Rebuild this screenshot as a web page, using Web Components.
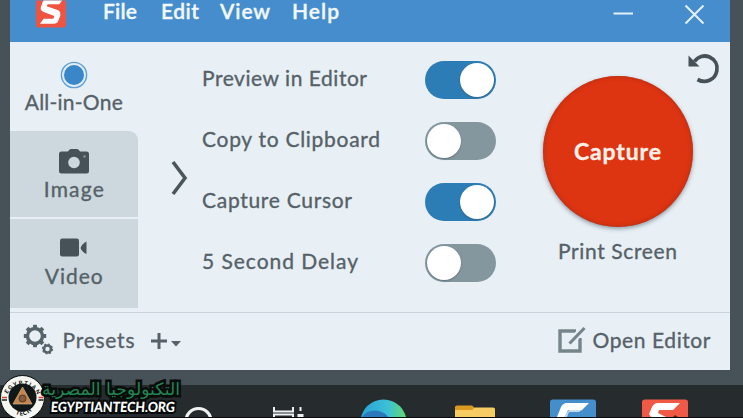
<!DOCTYPE html>
<html lang="en">
<head>
    <meta charset="UTF-8">
    <title>Capture</title>
    <style>
        body {
            margin: 0;
            width: 743px;
            height: 418px;
            overflow: hidden;
            background: #465257;
            font-family: Lato, "Open Sans", "Liberation Sans", sans-serif;
            font-size: 21px;
            color: #566168;
        }
    </style>
</head>

<body>
<capture-desktop>
    <capture-window>
        <title-bar slot="title"></title-bar>
        <mode-tab slot="modes" kind="all" label="All-in-One" w="98" selected></mode-tab>
        <mode-tab slot="modes" kind="image" label="Image" w="60"></mode-tab>
        <mode-tab slot="modes" kind="video" label="Video" w="58"></mode-tab>
        <toggle-row slot="options" label="Preview in Editor" w="165" on></toggle-row>
        <toggle-row slot="options" label="Copy to Clipboard" w="178"></toggle-row>
        <toggle-row slot="options" label="Capture Cursor" w="150" on></toggle-row>
        <toggle-row slot="options" label="5 Second Delay" w="156"></toggle-row>
        <capture-button slot="action"></capture-button>
        <window-footer slot="footer"></window-footer>
    </capture-window>
    <task-bar slot="taskbar"></task-bar>
    <site-badge slot="badge"></site-badge>
</capture-desktop>

<script>
  class BaseElement extends HTMLElement {
    constructor() {
      super();
      this.attachShadow({mode: "open"});
    }

    connectedCallback() {
      this.shadowRoot.innerHTML = this.render();
    }
  }

  // a single line of text, tracked so that it takes exactly w pixels
  class FitText extends HTMLElement {
    constructor() {
      super();
      this.attachShadow({mode: "open"});
      this.shadowRoot.innerHTML = `
        <style>
          :host { display: block; white-space: nowrap; line-height: 24px; }
          span { display: inline-block; -webkit-text-stroke: 0.35px currentColor; }
        </style>
        <span><slot></slot></span>`;
    }

    connectedCallback() {
      const width = parseFloat(this.getAttribute("w"));
      const span = this.shadowRoot.querySelector("span");
      const count = this.textContent.length;
      const spacing = (width - span.getBoundingClientRect().width) / (count - 1);
      span.style.letterSpacing = `${spacing}px`;
      span.style.marginRight = `${-spacing}px`;
    }
  }

  class CaptureDesktop extends BaseElement {
    render() {
      return `
        <style>
          :host { display: flex; flex-direction: column; position: relative; height: 418px; }
          .space { flex: 1; padding: 0 13px 0 9.5px; }
        </style>
        <div class="space"><slot></slot></div>
        <slot name="taskbar"></slot>
        <slot name="badge"></slot>`;
    }
  }

  class CaptureWindow extends BaseElement {
    render() {
      return `
        <style>
          :host { display: flex; flex-direction: column; height: 370px; background: #e8f0f5; }
          main { display: flex; height: 270px; }
          nav { display: flex; flex-direction: column; gap: 2px; width: 128.500px; height: 266px; }
          .arrow { width: 64px; display: flex; justify-content: flex-end; padding: 118px 14px 0 0; box-sizing: border-box; }
          .options { width: 293.500px; padding-top: 7.500px; }
          .action { flex: 1; }
        </style>
        <slot name="title"></slot>
        <main>
          <nav><slot name="modes"></slot></nav>
          <div class="arrow">
            <svg width="17" height="36" viewBox="0 0 17 36" fill="none" stroke="#4b565b" stroke-width="3.6">
              <path d="M2 2L14 18L2 34"/>
            </svg>
          </div>
          <div class="options"><slot name="options"></slot></div>
          <div class="action"><slot name="action"></slot></div>
        </main>
        <slot name="footer"></slot>`;
    }
  }

  class TitleBar extends BaseElement {
    render() {
      return `
        <style>
          :host { display: flex; height: 42px; background: #458dcc; color: #f2f8fd; }
          .logo { margin-left: 26px; }
          .menu { display: flex; margin: -1.500px 0 0 37.500px; }
          .menu fit-text { font-weight: 600; }
          .buttons { margin-left: auto; }
        </style>
        <svg class="logo" width="30" height="28" viewBox="0 0 31 28">
          <path d="M0 0H31V25Q31 28 28 28H3Q0 28 0 25Z" fill="#ed5542"/>
          <path d="M27 0L24 4H12L11 6L23 10Q26 12 25 16L23 21Q22 24 18 24H4L8 19H18L19 16L8 12Q4 10 5 7L7 1L8 0Z" fill="#fff"/>
        </svg>
        <div class="menu">
          <fit-text w="34" style="width: 58px">File</fit-text>
          <fit-text w="38" style="width: 59px">Edit</fit-text>
          <fit-text w="50" style="width: 72px">View</fit-text>
          <fit-text w="47">Help</fit-text>
        </div>
        <svg class="buttons" width="117" height="42" viewBox="0 0 117 42" fill="none" stroke="#e4f1fb">
          <path d="M.5 13.500H20" stroke-width="2"/>
          <path d="M72.500 5.500L90.500 23.500M90.500 5.500L72.500 23.500" stroke-width="2"/>
        </svg>`;
    }
  }

  const modeIcons = {
    all: `<svg width="28" height="28" viewBox="0 0 28 28">
        <circle cx="14" cy="14" r="12.6" fill="#dfedf7" stroke="#609fd3" stroke-width="1.4"/>
        <circle cx="14" cy="14" r="10" fill="#3986c8"/>
      </svg>`,
    image: `<svg width="30" height="25" viewBox="0 0 30 25">
        <path d="M2.500 2.500H9Q10 0 12 0H18Q20 0 21 2.500H27.500Q30 2.500 30 5V22Q30 24.500 27.500 24.500H2.500Q0 24.500 0 22V5Q0 2.500 2.500 2.500Z" fill="#465257"/>
        <circle cx="15" cy="13.500" r="5.800" fill="#ccd8de"/>
        <circle cx="25.500" cy="7.500" r="1.200" fill="#87959b"/>
      </svg>`,
    video: `<svg width="27" height="19" viewBox="0 0 27 19" fill="#465257">
        <rect x="0" y="0.500" width="19" height="18" rx="2.200"/>
        <path d="M26.500 3.500V16Q22 14 20.500 10Q22 5.500 26.500 3.500Z"/>
      </svg>`
  };

  class ModeTab extends BaseElement {
    render() {
      const kind = this.getAttribute("kind");
      const heights = {all: 91, image: 86, video: 89};
      const tops = {all: 18.5, image: 18, video: 18.5};
      const gaps = {all: 1, image: 3, video: 7.5};
      return `
        <style>
          :host { display: flex; flex-direction: column; align-items: center; box-sizing: border-box;
            height: ${heights[kind]}px; padding-top: ${tops[kind]}px; background: #ccd8de; }
          :host([selected]) { background: #e8f0f5; border-radius: 0 0 0 8px; margin-bottom: -4px; }
          :host([kind="image"]) { border-radius: 0 9px 0 0; }
          svg { display: block; flex: none; }
          fit-text { margin-top: ${gaps[kind]}px; }
        </style>
        ${modeIcons[kind]}
        <fit-text w="${this.getAttribute("w")}">${this.getAttribute("label")}</fit-text>`;
    }
  }

  class ToggleRow extends BaseElement {
    render() {
      return `
        <style>
          :host { display: flex; align-items: center; justify-content: space-between; height: 61px; }
          .track { display: flex; box-sizing: border-box; width: 71px; height: 38px; padding: 2px;
            border-radius: 19px; background: #84979f; }
          .knob { width: 34px; height: 34px; border-radius: 50%; background: #fff; box-shadow: 0 1px 2px #354c5a77; }
          :host([on]) .track { background: #2c7db5; justify-content: flex-end; }
          fit-text { padding-bottom: 4px; }
        </style>
        <fit-text w="${this.getAttribute("w")}">${this.getAttribute("label")}</fit-text>
        <div class="track"><div class="knob"></div></div>`;
    }
  }

  class CaptureButton extends BaseElement {
    render() {
      return `
        <style>
          :host { display: flex; flex-direction: column; box-sizing: border-box; height: 270px; padding: 10px 10px 0 47px; }
          .undo { align-self: flex-end; flex: none; margin-bottom: -10px; }
          .round { display: flex; align-items: center; justify-content: center; width: 150px; height: 151px;
            flex: none; border-radius: 50%; background: #dd3412; color: #fff0e8;
            box-shadow: 0 2px 4px #52647499, inset 0 0 4px #aa2e14; }
          .round fit-text { font-size: 23px; font-weight: 700; padding-bottom: 1px; }
          .key { display: flex; justify-content: center; width: 150px; margin-top: 12px; }
        </style>
        <svg class="undo" width="33" height="34" viewBox="0 0 33 34">
          <path d="M7.500 9.500C11 4.500 17 2.700 22.500 5C28 7.500 31 13 29.800 19C28 28 18.500 32 10.500 27.500" fill="none" stroke="#465257" stroke-width="3.800"/>
          <path d="M1.500 3.500L12.500 14.500H1.500Z" fill="#465257"/>
        </svg>
        <div class="round"><fit-text w="87">Capture</fit-text></div>
        <div class="key"><fit-text w="119">Print Screen</fit-text></div>`;
    }
  }

  class WindowFooter extends BaseElement {
    render() {
      let teeth = "";
      for (let i = 0; i < 8; i++) {
        teeth += `<path d="M12 .8V5" transform="rotate(${i * 45} 12 12)"/>`;
      }
      return `
        <style>
          :host { display: flex; align-items: center; box-sizing: border-box; height: 58px;
            padding: 0 19.500px 4px 13px; border-top: 1px solid #cad5db; }
          .gears { margin-right: 9px; }
          .plus { margin-left: 15px; padding-top: 2px; }
          .edit { margin: 0 6px 0 auto; }
        </style>
        <svg class="gears" width="31" height="31" viewBox="0 0 31 31" fill="none" stroke="#56636a">
          <circle cx="12" cy="12" r="7.500" stroke-width="3.400"/>
          <g stroke-width="4">${teeth}</g>
          <circle cx="24.500" cy="25" r="3.500" stroke-width="2.600"/>
          <circle cx="24.500" cy="25" r="5" stroke-width="1.200" stroke-dasharray="2 1.900"/>
        </svg>
        <fit-text w="72">Presets</fit-text>
        <svg class="plus" width="32" height="18" viewBox="0 0 32 18">
          <path d="M1 9H17M9 1V17" fill="none" stroke="#566168" stroke-width="3"/>
          <path d="M21 9H31L26 14.500Z" fill="#566168"/>
        </svg>
        <svg class="edit" width="28" height="28" viewBox="0 0 28 28" fill="none">
          <path d="M18 5H2V25H22V12" stroke="#76858b" stroke-width="3.400"/>
          <path d="M12 17L26 2" stroke="#e8f0f5" stroke-width="7"/>
          <path d="M11.500 17.500L26.500 2" stroke="#76858b" stroke-width="3.200"/>
        </svg>
        <fit-text w="118">Open Editor</fit-text>`;
    }
  }

  class TaskBar extends BaseElement {
    render() {
      return `
        <style>
          :host { display: flex; align-items: flex-end; box-sizing: border-box; height: 33px; padding-left: 184px;
            background: #262c2e; border-bottom: 1px solid #090b0c; overflow: hidden; }
          svg { display: block; flex: none; }
        </style>
        <svg width="30" height="11" viewBox="0 0 30 11">
          <circle cx="14.500" cy="15" r="12.500" fill="none" stroke="#f0f2f2" stroke-width="3.200"/>
        </svg>
        <svg width="33" height="11" viewBox="0 0 33 11" style="margin-left: 58px" fill="none" stroke="#edf0f1" stroke-width="2">
          <path d="M2 1V5.500H21V1M2 11V8.500H21V11M28.500 1V5"/>
          <path d="M25.500 8H31.500V12H25.500Z" fill="#edf0f1" stroke="none"/>
        </svg>
        <svg width="47" height="18" viewBox="0 0 47 18" style="margin-left: 55px">
          <defs>
            <linearGradient id="edge">
              <stop offset="0" stop-color="#29a2d6"/>
              <stop offset=".6" stop-color="#3cc0d7"/>
              <stop offset="1" stop-color="#63dc69"/>
            </linearGradient>
          </defs>
          <ellipse cx="23.500" cy="23" rx="23" ry="22.500" fill="url(#edge)"/>
          <path d="M2 18Q8 10 19 12Q26 14 28 18Z" fill="#2b79bd"/>
        </svg>
        <svg width="41" height="12" viewBox="0 0 41 12" style="margin-left: 48px">
          <path d="M0 12V2Q0 .5 2 .5H17L20 3H38Q40 3 40 5V12Z" fill="#d99b20"/>
          <path d="M0 5H17L20 2.500H38Q40 2.500 40 4.500V12H0Z" fill="#f7cd63"/>
        </svg>
        <svg width="46" height="18" viewBox="0 0 46 18" style="margin-left: 54px">
          <path d="M0 18V3Q0 .5 3 .5H43Q46 .5 46 3V18Z" fill="#438ecb"/>
          <path d="M39 4L32 11H18L15 18H7L11 8Q13 4 17 4Z" fill="#fff"/>
          <path d="M19 11H32L29 13H19L17 18H14Z" fill="#c4d9ea"/>
        </svg>
        <svg width="46" height="18" viewBox="0 0 46 18" style="margin-left: 46px">
          <path d="M0 18V3Q0 .5 3 .5H43Q46 .5 46 3V18Z" fill="#ef5945"/>
          <path d="M38 4L31 11H17L16 14L24 18H9L7 15L10 8Q12 4 16 4Z" fill="#fff"/>
          <path d="M33 16L36 18H31Z" fill="#562a28"/>
        </svg>`;
    }
  }

  // site mark that floats over the lower left corner
  class SiteBadge extends BaseElement {
    render() {
      return `
        <style>
          :host { display: flex; position: absolute; left: 0; top: 375px; width: 184px; height: 43px; overflow: hidden; }
          svg { display: block; flex: none; }
          .names { display: flex; flex-direction: column; align-items: flex-end; width: 138px; margin: 5px 0 0 -3px; }
          .arabic { width: 138px; text-align: right; white-space: nowrap;
            font: 17px/19px "DejaVu Sans", sans-serif; color: #238553; direction: rtl;
            -webkit-text-stroke: 5px #080d0b; paint-order: stroke fill; }
          .site { font: 900 14px/15px Lato, sans-serif; color: #fff; width: 129px;
            white-space: nowrap; -webkit-text-stroke: 4px #050909; paint-order: stroke fill; }
        </style>
        <svg width="45" height="43" viewBox="0 0 45 43">
          <defs><path id="arc" d="M6.500 23A16 16 0 0 1 38 23"/><path id="low" d="M6 29Q21 52 38 29"/></defs>
          <circle cx="22.500" cy="22.500" r="22" fill="#f5f5f1" stroke="#0b0d0d"/>
          <circle cx="22.500" cy="22.500" r="14" fill="#101719"/>
          <path d="M22.500 12L32 29H13Z" fill="#c28551" stroke="#d8ad79" stroke-width=".7"/>
          <circle cx="22.500" cy="23.500" r="3.500" fill="#8a5c3e" stroke="#513828"/>
          <path d="M2 22.500H7M38.500 22.500H43.500" stroke="#ce4a38" stroke-width="1.500"/>
          <path d="M2 25H7M38.500 25H43.500" stroke="#222" stroke-width="1.500"/>
          <g fill="#111" font-family="Lato, sans-serif" font-size="5.800" font-weight="900">
            <text letter-spacing="1.200"><textPath href="#arc" startOffset="4">EGYPTIAN</textPath></text>
            <text letter-spacing=".8"><textPath href="#low" startOffset="14">TECH</textPath></text>
          </g>
        </svg>
        <div class="names">
          <div class="arabic" lang="ar">التكنولوجيا المصرية</div>
          <div class="site">EGYPTIANTECH.ORG</div>
        </div>`;
    }

    connectedCallback() {
      super.connectedCallback();
      this.squeeze(".arabic", 138, "right");
      this.squeeze(".site", 124, "left");
    }

    // joined arabic letters cannot be tracked, so both lines scale instead
    squeeze(selector, width, origin) {
      const line = this.shadowRoot.querySelector(selector);
      const range = document.createRange();
      range.selectNodeContents(line);
      const scale = width / range.getBoundingClientRect().width;
      line.style.transformOrigin = origin;
      line.style.transform = `scaleX(${scale}) skewX(${selector === ".site" ? -5 : 0}deg)`;
    }
  }

  customElements.define("fit-text", FitText);
  customElements.define("capture-desktop", CaptureDesktop);
  customElements.define("capture-window", CaptureWindow);
  customElements.define("title-bar", TitleBar);
  customElements.define("mode-tab", ModeTab);
  customElements.define("toggle-row", ToggleRow);
  customElements.define("capture-button", CaptureButton);
  customElements.define("window-footer", WindowFooter);
  customElements.define("task-bar", TaskBar);
  customElements.define("site-badge", SiteBadge);
</script>
</body>
</html>
